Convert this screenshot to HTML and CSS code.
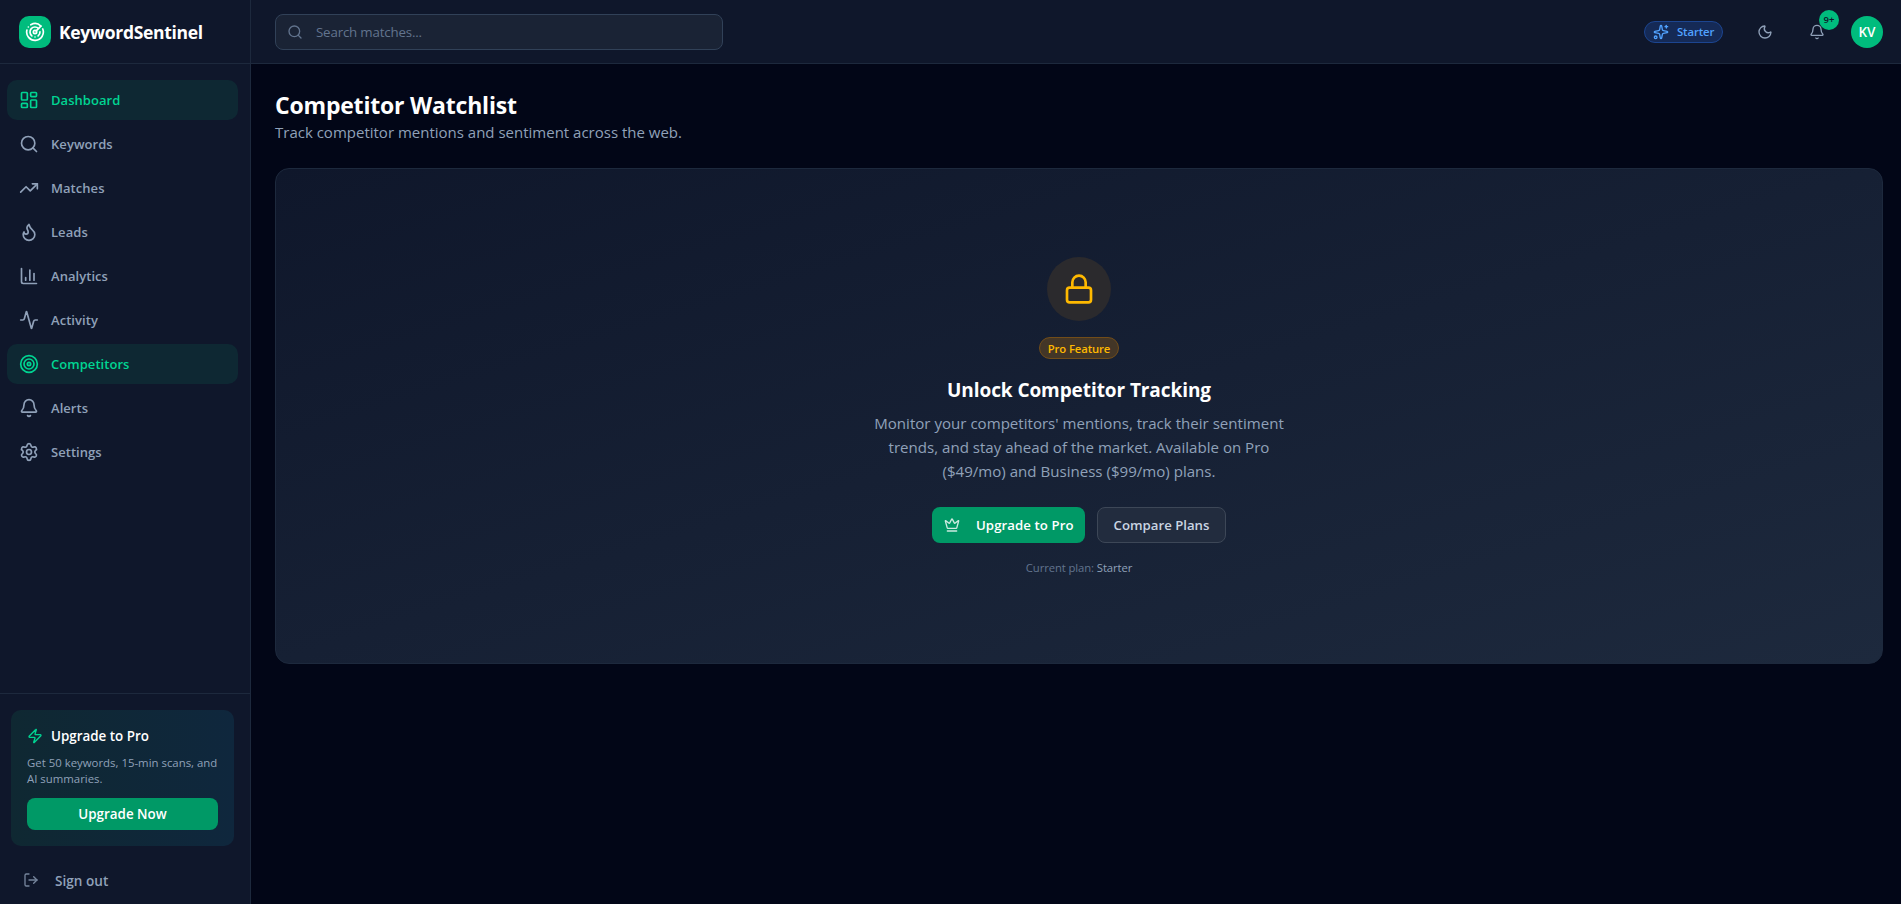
FILE: index.html
```html
<!DOCTYPE html>
<html lang="en">
<head>
  <meta charset="UTF-8">
  <meta name="viewport" content="width=device-width, initial-scale=1.0">
  <title>Competitor Watchlist - KeywordSentinel</title>
  <link rel="stylesheet" href="styles.css">
</head>
<body>

  <aside class="sidebar">
    <div class="brand">
      <span class="brand-logo">
        <svg class="icon" viewBox="0 0 24 24"><path d="M19.07 4.93A10 10 0 0 0 6.99 3.34"/><path d="M4 6h.01"/><path d="M2.29 9.62A10 10 0 1 0 21.31 8.35"/><path d="M16.24 7.76A6 6 0 1 0 8.23 16.67"/><path d="M12 18h.01"/><path d="M17.99 11.66A6 6 0 0 1 15.77 16.67"/><circle cx="12" cy="12" r="2"/><path d="m13.41 10.59 5.66-5.66"/></svg>
      </span>
      <span class="brand-name">KeywordSentinel</span>
    </div>

    <nav class="nav">
      <a class="nav-item active">
        <svg class="icon" viewBox="0 0 24 24"><rect width="7" height="9" x="3" y="3" rx="1"/><rect width="7" height="5" x="14" y="3" rx="1"/><rect width="7" height="9" x="14" y="12" rx="1"/><rect width="7" height="5" x="3" y="16" rx="1"/></svg>
        <span>Dashboard</span>
      </a>
      <a class="nav-item">
        <svg class="icon" viewBox="0 0 24 24"><circle cx="11" cy="11" r="8"/><path d="m21 21-4.34-4.34"/></svg>
        <span>Keywords</span>
      </a>
      <a class="nav-item">
        <svg class="icon" viewBox="0 0 24 24"><path d="M16 7h6v6"/><path d="m22 7-8.5 8.5-5-5L2 17"/></svg>
        <span>Matches</span>
      </a>
      <a class="nav-item">
        <svg class="icon" viewBox="0 0 24 24"><path d="M12 3q1 4 4 6.5t3 5.5a1 1 0 0 1-14 0 5 5 0 0 1 1-3 1 1 0 0 0 5 0c0-2-1.5-3-1.5-5q0-2 2.5-4"/></svg>
        <span>Leads</span>
      </a>
      <a class="nav-item">
        <svg class="icon" viewBox="0 0 24 24"><path d="M3 3v16a2 2 0 0 0 2 2h16"/><path d="M18 17V9"/><path d="M13 17V5"/><path d="M8 17v-3"/></svg>
        <span>Analytics</span>
      </a>
      <a class="nav-item">
        <svg class="icon" viewBox="0 0 24 24"><path d="M22 12h-2.48a2 2 0 0 0-1.93 1.46l-2.35 8.36a.25.25 0 0 1-.48 0L9.24 2.18a.25.25 0 0 0-.48 0l-2.35 8.36A2 2 0 0 1 4.49 12H2"/></svg>
        <span>Activity</span>
      </a>
      <a class="nav-item active">
        <svg class="icon" viewBox="0 0 24 24"><circle cx="12" cy="12" r="10"/><circle cx="12" cy="12" r="6"/><circle cx="12" cy="12" r="2"/></svg>
        <span>Competitors</span>
      </a>
      <a class="nav-item">
        <svg class="icon" viewBox="0 0 24 24"><path d="M10.268 21a2 2 0 0 0 3.464 0"/><path d="M3.262 15.326A1 1 0 0 0 4 17h16a1 1 0 0 0 .74-1.673C19.41 13.956 18 12.499 18 8A6 6 0 0 0 6 8c0 4.499-1.411 5.956-2.738 7.326"/></svg>
        <span>Alerts</span>
      </a>
      <a class="nav-item">
        <svg class="icon" viewBox="0 0 24 24"><path d="M9.671 4.136a2.34 2.34 0 0 1 4.659 0 2.34 2.34 0 0 0 3.319 1.915 2.34 2.34 0 0 1 2.33 4.033 2.34 2.34 0 0 0 0 3.831 2.34 2.34 0 0 1-2.33 4.033 2.34 2.34 0 0 0-3.319 1.915 2.34 2.34 0 0 1-4.659 0 2.34 2.34 0 0 0-3.32-1.915 2.34 2.34 0 0 1-2.33-4.033 2.34 2.34 0 0 0 0-3.831A2.34 2.34 0 0 1 6.35 6.051a2.34 2.34 0 0 0 3.319-1.915"/><circle cx="12" cy="12" r="3"/></svg>
        <span>Settings</span>
      </a>
    </nav>

    <div class="sidebar-footer">
      <div class="promo">
        <div class="promo-title">
          <svg class="icon" viewBox="0 0 24 24"><path d="M4 14a1 1 0 0 1-.78-1.63l9.9-10.2a.5.5 0 0 1 .86.46l-1.92 6.02A1 1 0 0 0 13 10h7a1 1 0 0 1 .78 1.63l-9.9 10.2a.5.5 0 0 1-.86-.46l1.92-6.02A1 1 0 0 0 11 14z"/></svg>
          <span>Upgrade to Pro</span>
        </div>
        <p class="promo-text">Get 50 keywords, 15-min scans, and<br>AI summaries.</p>
        <button class="promo-button">Upgrade Now</button>
      </div>
      <a class="sign-out">
        <svg class="icon" viewBox="0 0 24 24"><path d="m16 17 5-5-5-5"/><path d="M21 12H9"/><path d="M9 21H5a2 2 0 0 1-2-2V5a2 2 0 0 1 2-2h4"/></svg>
        <span>Sign out</span>
      </a>
    </div>
  </aside>

  <div class="content">
    <header class="topbar">
      <div class="search">
        <svg class="icon" viewBox="0 0 24 24"><circle cx="11" cy="11" r="8"/><path d="m21 21-4.34-4.34"/></svg>
        <span>Search matches...</span>
      </div>
      <div class="topbar-actions">
        <span class="plan-pill">
          <svg class="icon" viewBox="0 0 24 24"><path d="M11.017 2.814a1 1 0 0 1 1.966 0l1.051 5.558a2 2 0 0 0 1.594 1.594l5.558 1.051a1 1 0 0 1 0 1.966l-5.558 1.051a2 2 0 0 0-1.594 1.594l-1.051 5.558a1 1 0 0 1-1.966 0l-1.051-5.558a2 2 0 0 0-1.594-1.594l-5.558-1.051a1 1 0 0 1 0-1.966l5.558-1.051a2 2 0 0 0 1.594-1.594z"/><path d="M20 2v4"/><path d="M22 4h-4"/><circle cx="4" cy="20" r="2"/></svg>
          <span>Starter</span>
        </span>
        <button class="icon-button theme-toggle">
          <svg class="icon" viewBox="0 0 24 24"><path d="M20.985 12.486a9 9 0 1 1-9.473-9.472c.405-.022.617.46.402.803a6 6 0 0 0 8.268 8.268c.344-.215.825-.004.803.401"/></svg>
        </button>
        <button class="icon-button notifications">
          <svg class="icon" viewBox="0 0 24 24"><path d="M10.268 21a2 2 0 0 0 3.464 0"/><path d="M3.262 15.326A1 1 0 0 0 4 17h16a1 1 0 0 0 .74-1.673C19.41 13.956 18 12.499 18 8A6 6 0 0 0 6 8c0 4.499-1.411 5.956-2.738 7.326"/></svg>
          <span class="count">9+</span>
        </button>
        <span class="avatar">KV</span>
      </div>
    </header>

    <main class="main">
      <h1>Competitor Watchlist</h1>
      <p class="subtitle">Track competitor mentions and sentiment across the web.</p>

      <section class="locked-card">
        <div class="lock-circle">
          <svg class="icon" viewBox="0 0 24 24"><rect width="18" height="11" x="3" y="11" rx="2"/><path d="M7 11V7a5 5 0 0 1 10 0v4"/></svg>
        </div>
        <span class="pro-badge">Pro Feature</span>
        <h2>Unlock Competitor Tracking</h2>
        <p class="description">Monitor your competitors' mentions, track their sentiment<br>trends, and stay ahead of the market. Available on Pro<br>($49/mo) and Business ($99/mo) plans.</p>
        <div class="card-actions">
          <button class="button primary">
            <svg class="icon" viewBox="0 0 24 24"><path d="M11.562 3.266a.5.5 0 0 1 .876 0L15.39 8.87a1 1 0 0 0 1.516.294L21.183 5.5a.5.5 0 0 1 .798.519l-2.834 10.246a1 1 0 0 1-.956.734H5.81a1 1 0 0 1-.957-.734L2.02 6.02a.5.5 0 0 1 .798-.519l4.276 3.664a1 1 0 0 0 1.516-.294z"/><path d="M5 21h14"/></svg>
            <span>Upgrade to Pro</span>
          </button>
          <button class="button secondary">Compare Plans</button>
        </div>
        <p class="current-plan">Current plan: <b>Starter</b></p>
      </section>
    </main>
  </div>

</body>
</html>
```
FILE: styles.css
```css
* {
  box-sizing: border-box;
}

body {
  display: flex;
  height: 100vh;
  margin: 0;
  overflow: hidden;
  background: #020617;
  color: #90a1b9;
  font-family: "Open Sans", "Noto Sans", sans-serif;
  font-size: 15px;
}

h1, h2, p {
  margin: 0;
}

button {
  border: 0;
  padding: 0;
  background: none;
  color: inherit;
  font: inherit;
  cursor: pointer;
}

.icon {
  width: 16px;
  height: 16px;
  flex-shrink: 0;
  fill: none;
  stroke: currentColor;
  stroke-width: 2;
  stroke-linecap: round;
  stroke-linejoin: round;
}

/* Sidebar */
.sidebar {
  display: flex;
  flex-direction: column;
  width: 251px;
  flex-shrink: 0;
  background: #0f172b;
  border-right: 1px solid #1d293d;
}

.brand {
  display: flex;
  align-items: center;
  gap: 8px;
  height: 64px;
  padding-left: 19px;
  border-bottom: 1px solid #1d293d;
}

.brand-logo {
  display: flex;
  align-items: center;
  justify-content: center;
  width: 32px;
  height: 32px;
  border-radius: 10px;
  background: #00bc7d;
  color: #fff;
}

.brand-logo .icon {
  width: 20px;
  height: 20px;
}

.brand-name {
  padding-top: 1px;
  color: #fff;
  font-size: 17.5px;
  font-weight: 700;
  letter-spacing: -0.3px;
}

.nav {
  display: flex;
  flex: 1;
  flex-direction: column;
  gap: 4px;
  padding: 16px 12px 0 7px;
}

.nav-item {
  display: flex;
  align-items: center;
  gap: 12px;
  height: 40px;
  padding-left: 12px;
  border-radius: 10px;
  font-size: 13px;
  font-weight: 600;
  letter-spacing: 0.05px;
}

.nav-item .icon {
  width: 20px;
  height: 20px;
}

.nav-item.active {
  background: #0e2833;
  color: #00d492;
}

.sidebar-footer {
  height: 211px;
  padding: 16px 16px 0 11px;
  border-top: 1px solid #1d293d;
}

.promo {
  height: 136px;
  padding: 16px;
  border-radius: 10px;
  background: linear-gradient(90deg, #0f2832, #0f273d);
}

.promo-title {
  display: flex;
  align-items: center;
  gap: 8px;
  height: 20px;
  color: #fff;
  font-size: 13.4px;
  font-weight: 600;
}

.promo-title .icon {
  color: #00d492;
}

.promo-text {
  margin: 9px 0 11px;
  font-size: 11.4px;
  line-height: 16px;
}

.promo-button {
  width: 100%;
  height: 32px;
  border-radius: 8px;
  background: #009966;
  color: #fff;
  font-size: 13.4px;
  font-weight: 600;
}

.sign-out {
  display: flex;
  align-items: center;
  gap: 16px;
  height: 36px;
  margin-top: 16px;
  padding-left: 12px;
  font-size: 13.6px;
  font-weight: 600;
}

.sign-out .icon,
.button .icon {
  opacity: 0.8;
}

/* Top bar */
.content {
  display: flex;
  flex: 1;
  flex-direction: column;
}

.topbar {
  display: flex;
  align-items: center;
  justify-content: space-between;
  height: 64px;
  padding: 0 18px 0 24px;
  background: #0f172b;
  border-bottom: 1px solid #1d293d;
}

.search {
  display: flex;
  align-items: center;
  gap: 13px;
  width: 448px;
  height: 36px;
  padding-left: 11px;
  border: 1px solid #314158;
  border-radius: 8px;
  background: #1a2335;
  color: #62748e;
  font-size: 13.3px;
  letter-spacing: -0.17px;
}

.topbar-actions {
  display: flex;
  align-items: center;
}

.plan-pill {
  display: flex;
  align-items: center;
  gap: 8px;
  width: 79px;
  height: 22px;
  padding-left: 8px;
  border: 1px solid #1c4590;
  border-radius: 11px;
  background: #152a56;
  color: #51a2ff;
  font-size: 11.3px;
  font-weight: 600;
  letter-spacing: -0.1px;
}

.icon-button {
  position: relative;
  display: flex;
  align-items: center;
  justify-content: center;
  width: 36px;
  height: 36px;
}

.theme-toggle {
  margin-left: 24px;
}

.notifications {
  margin: 0 16px;
}

.count {
  position: absolute;
  top: -4px;
  right: -4px;
  width: 20px;
  height: 20px;
  border-radius: 50%;
  background: #00bc7d;
  color: #0f172b;
  font-size: 9.5px;
  font-weight: 600;
  line-height: 20px;
  text-align: center;
}

.avatar {
  display: flex;
  align-items: center;
  justify-content: center;
  width: 32px;
  height: 32px;
  border-radius: 50%;
  background: #00bc7d;
  color: #fff;
  font-size: 13.5px;
  font-weight: 600;
}

/* Competitors page */
.main {
  flex: 1;
  padding: 25px 18px 0 24px;
}

h1 {
  color: #fff;
  font-size: 23px;
  font-weight: 700;
  line-height: 32px;
  letter-spacing: -0.2px;
}

.subtitle {
  margin-top: -1px;
  line-height: 24px;
}

.locked-card {
  display: flex;
  flex-direction: column;
  align-items: center;
  height: 496px;
  margin-top: 24px;
  padding-top: 88px;
  border: 1px solid #1d293d;
  border-radius: 14px;
  background: linear-gradient(to bottom right, #0f172b, #1d293d);
}

.lock-circle {
  display: flex;
  align-items: center;
  justify-content: center;
  width: 64px;
  height: 64px;
  border-radius: 50%;
  background: #2b2a2d;
  color: #ffb900;
}

.lock-circle .icon {
  width: 32px;
  height: 32px;
}

.pro-badge {
  display: flex;
  align-items: center;
  justify-content: center;
  width: 80px;
  height: 22px;
  margin-top: 16px;
  border: 1px solid #724d19;
  border-radius: 11px;
  background: #433627;
  color: #ffb900;
  font-size: 11.3px;
  font-weight: 600;
  letter-spacing: -0.12px;
}

h2 {
  margin-top: 17px;
  color: #fff;
  font-size: 19px;
  font-weight: 700;
  line-height: 28px;
  letter-spacing: -0.08px;
}

.description {
  margin-top: 7px;
  font-size: 15.08px;
  line-height: 24px;
  text-align: center;
}

.card-actions {
  display: flex;
  gap: 12px;
  margin-top: 24px;
}

.button {
  display: flex;
  align-items: center;
  height: 36px;
  border-radius: 8px;
  font-size: 13.2px;
  font-weight: 600;
}

.button.primary {
  gap: 16px;
  width: 153px;
  padding-left: 12px;
  background: #009966;
  color: #fff;
  letter-spacing: 0.08px;
}

.button.secondary {
  justify-content: center;
  width: 129px;
  border: 1px solid #3d4757;
  background: #222c3e;
  color: #cad5e2;
}

.current-plan {
  margin-top: 17px;
  color: #62748e;
  font-size: 11.3px;
  line-height: 16px;
  letter-spacing: -0.1px;
}

.current-plan b {
  color: #90a1b9;
  font-weight: 500;
}
```
